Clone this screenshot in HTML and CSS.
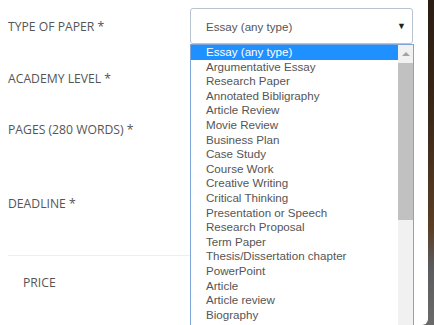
FILE: index.html
```html
<!DOCTYPE html>
<html>
<head>
<meta charset="utf-8">
<link rel="stylesheet" href="styles.css">
</head>
<body>
<div class="panel">
  <div class="form">
    <div class="row row-type">
      <div class="label">TYPE OF PAPER *</div>
      <div class="field">
        <div class="select">
          <span>Essay (any type)</span>
          <span class="arrow">&#9660;</span>
        </div>
      </div>
    </div>
    <div class="row row-level">
      <div class="label">ACADEMY LEVEL *</div>
    </div>
    <div class="row row-pages">
      <div class="label">PAGES (280 WORDS) *</div>
    </div>
    <div class="row row-deadline">
      <div class="label">DEADLINE *</div>
    </div>
    <div class="divider"></div>
    <div class="price">PRICE</div>
  </div>
  <div class="dropdown">
    <ul class="options">
      <li class="selected">Essay (any type)</li>
      <li>Argumentative Essay</li>
      <li>Research Paper</li>
      <li>Annotated Bibligraphy</li>
      <li>Article Review</li>
      <li>Movie Review</li>
      <li>Business Plan</li>
      <li>Case Study</li>
      <li>Course Work</li>
      <li>Creative Writing</li>
      <li>Critical Thinking</li>
      <li>Presentation or Speech</li>
      <li>Research Proposal</li>
      <li>Term Paper</li>
      <li>Thesis/Dissertation chapter</li>
      <li>PowerPoint</li>
      <li>Article</li>
      <li>Article review</li>
      <li>Biography</li>
    </ul>
    <div class="scrollbar">
      <div class="up"></div>
      <div class="thumb"></div>
    </div>
  </div>
</div>
</body>
</html>
```

FILE: styles.css
```css
html, body {
  margin: 0;
  padding: 0;
  overflow: hidden;
}
body {
  width: 434px;
  height: 325px;
  background: linear-gradient(to bottom, #2a1d14 0%, #3a2818 35%, #5a3e25 70%, #5b5b5e 82%, #6a6a6a 100%);
}
.panel {
  position: relative;
  width: 428px;
  height: 325px;
  background: #fff;
  border-bottom-right-radius: 6px;
}
.form {
  display: flex;
  flex-direction: column;
  padding: 8px 0 0 0;
}
.row {
  display: grid;
  grid-template-columns: 190px 223px;
  height: 36px;
  align-items: center;
}
.label {
  font-family: "Open Sans", sans-serif;
  font-size: 12.2px;
  color: #555;
  padding-left: 8px;
}
.row-level { margin-top: 16px; }
.row-pages { margin-top: 16px; height: 58px; align-items: start; }
.row-pages .label { line-height: 36px; }
.row-deadline { margin-top: 15px; }
.divider {
  margin: 34px 0 0 8px;
  border-top: 1px solid #eee;
  width: 400px;
}
.price {
  font-family: "Open Sans", sans-serif;
  font-size: 12.2px;
  color: #555;
  padding-left: 23px;
  margin-top: 18px;
}
.select {
  box-sizing: border-box;
  height: 36px;
  border: 1px solid #b9c3d0;
  border-radius: 3px;
  display: flex;
  align-items: center;
  justify-content: space-between;
  padding: 0 6px 0 15px;
  font-family: "Liberation Sans", Arial, sans-serif;
  font-size: 11.6px;
  color: #555;
}
.arrow {
  font-size: 9px;
  color: #222;
}
.dropdown {
  position: absolute;
  left: 190px;
  top: 44px;
  width: 224px;
  height: 284px;
  box-sizing: border-box;
  border: 1px solid #7ea4d8;
  background: #fff;
  display: flex;
}
.options {
  list-style: none;
  margin: 0;
  padding: 0;
  flex: 1;
  font-family: "Liberation Sans", Arial, sans-serif;
  font-size: 11.6px;
  color: #555;
}
.options li {
  height: 14.6px;
  line-height: 14.6px;
  padding-left: 15px;
  white-space: nowrap;
}
.options li.selected {
  background: #1e90ff;
  color: #fff;
}
.scrollbar {
  width: 15px;
  background: #f1f1f1;
  display: flex;
  flex-direction: column;
  align-items: center;
}
.up {
  margin-top: 7px;
  width: 0;
  height: 0;
  border-left: 4px solid transparent;
  border-right: 4px solid transparent;
  border-bottom: 4px solid #a3a3a3;
}
.thumb {
  margin-top: 7px;
  width: 15px;
  height: 157px;
  background: #c1c1c1;
}
```
